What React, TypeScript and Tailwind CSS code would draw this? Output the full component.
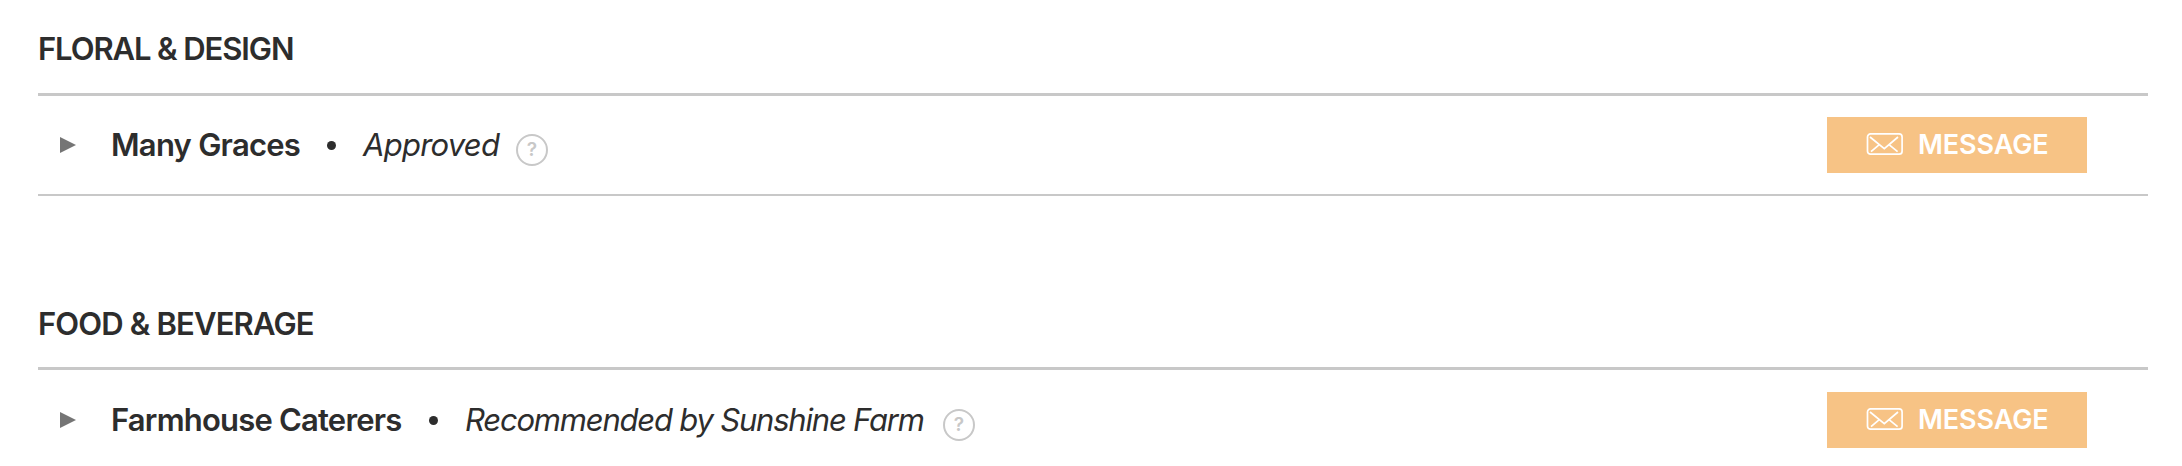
type Vendor = {
  category: string;
  name: string;
  status: string;
  headingClass: string;
  nameClass: string;
  statusClass: string;
  rowClass: string;
};

const vendors: Vendor[] = [
  {
    category: "FLORAL & DESIGN",
    name: "Many Graces",
    status: "Approved",
    headingClass: "h-[93px] tracking-[-1.1px]",
    nameClass: "w-[216px] tracking-[-0.75px]",
    statusClass: "w-[153px] tracking-[-0.75px]",
    rowClass: "h-[100px] pt-[21px] border-b-2",
  },
  {
    category: "FOOD & BEVERAGE",
    name: "Farmhouse Caterers",
    status: "Recommended by Sunshine Farm",
    headingClass: "mt-[79px] h-[92px] tracking-[-0.85px]",
    nameClass: "w-[318px] tracking-[-0.8px]",
    statusClass: "w-[478px] tracking-[-1.2px]",
    rowClass: "h-[96px] pt-[22px]",
  },
];

const EnvelopeIcon = () => (
  <svg width="38" height="24" viewBox="0 0 38 24" fill="none" stroke="white" strokeWidth="1.7">
    <rect x="1.5" y="0.9" width="34.6" height="20.3" rx="3" />
    <path d="M4 4 18.3 15.6 32 4M5 18.7 13.3 11.6M31.6 18.7 23 11.6" />
  </svg>
);

const MessageButton = () => (
  <button type="button" className="ml-auto flex h-14 w-[260px] items-center bg-[#f7c385] pl-[39px] text-white">
    <EnvelopeIcon />
    <span className="mb-0.5 ml-[14px] text-[27px] font-semibold leading-none tracking-[-0.1px]">MESSAGE</span>
  </button>
);

const VendorSection = ({ vendor }: { vendor: Vendor }) => (
  <section>
    <h2 className={`whitespace-nowrap pt-[29px] text-[31px] leading-10 font-semibold ${vendor.headingClass}`}>
      {vendor.category}
    </h2>
    <div className="h-[3px] bg-[#c8c8c8]" />
    <div className={`flex items-start border-[#c8c8c8] pr-[61px] pl-[22px] ${vendor.rowClass}`}>
      <svg className="mt-5 mr-[35px] shrink-0" width="16" height="16" viewBox="0 0 16 16">
        <path d="M0 0 16 8 0 16Z" fill="#757575" />
      </svg>
      <span className={`shrink-0 whitespace-nowrap pt-2 text-[31px] leading-10 font-semibold ${vendor.nameClass}`}>
        {vendor.name}
      </span>
      <span className="mt-[24px] mr-[27px] size-[9px] shrink-0 rounded-full bg-[#2d2d2d]" />
      <span className={`shrink-0 whitespace-nowrap pt-2 text-[31px] leading-10 italic ${vendor.statusClass}`}>
        {vendor.status}
      </span>
      <span className="mt-[17px] flex size-8 shrink-0 items-center justify-center rounded-full border-2 border-[#c8c8c8] text-[19px] font-semibold text-[#c8c8c8]">
        ?
      </span>
      <MessageButton />
    </div>
  </section>
);

export default function App() {
  return (
    <main className="h-[466px] overflow-hidden bg-white pr-[34px] pl-[38px] font-['Inter',sans-serif] text-[#2d2d2d]">
      {vendors.map((vendor) => (
        <VendorSection key={vendor.name} vendor={vendor} />
      ))}
    </main>
  );
}
